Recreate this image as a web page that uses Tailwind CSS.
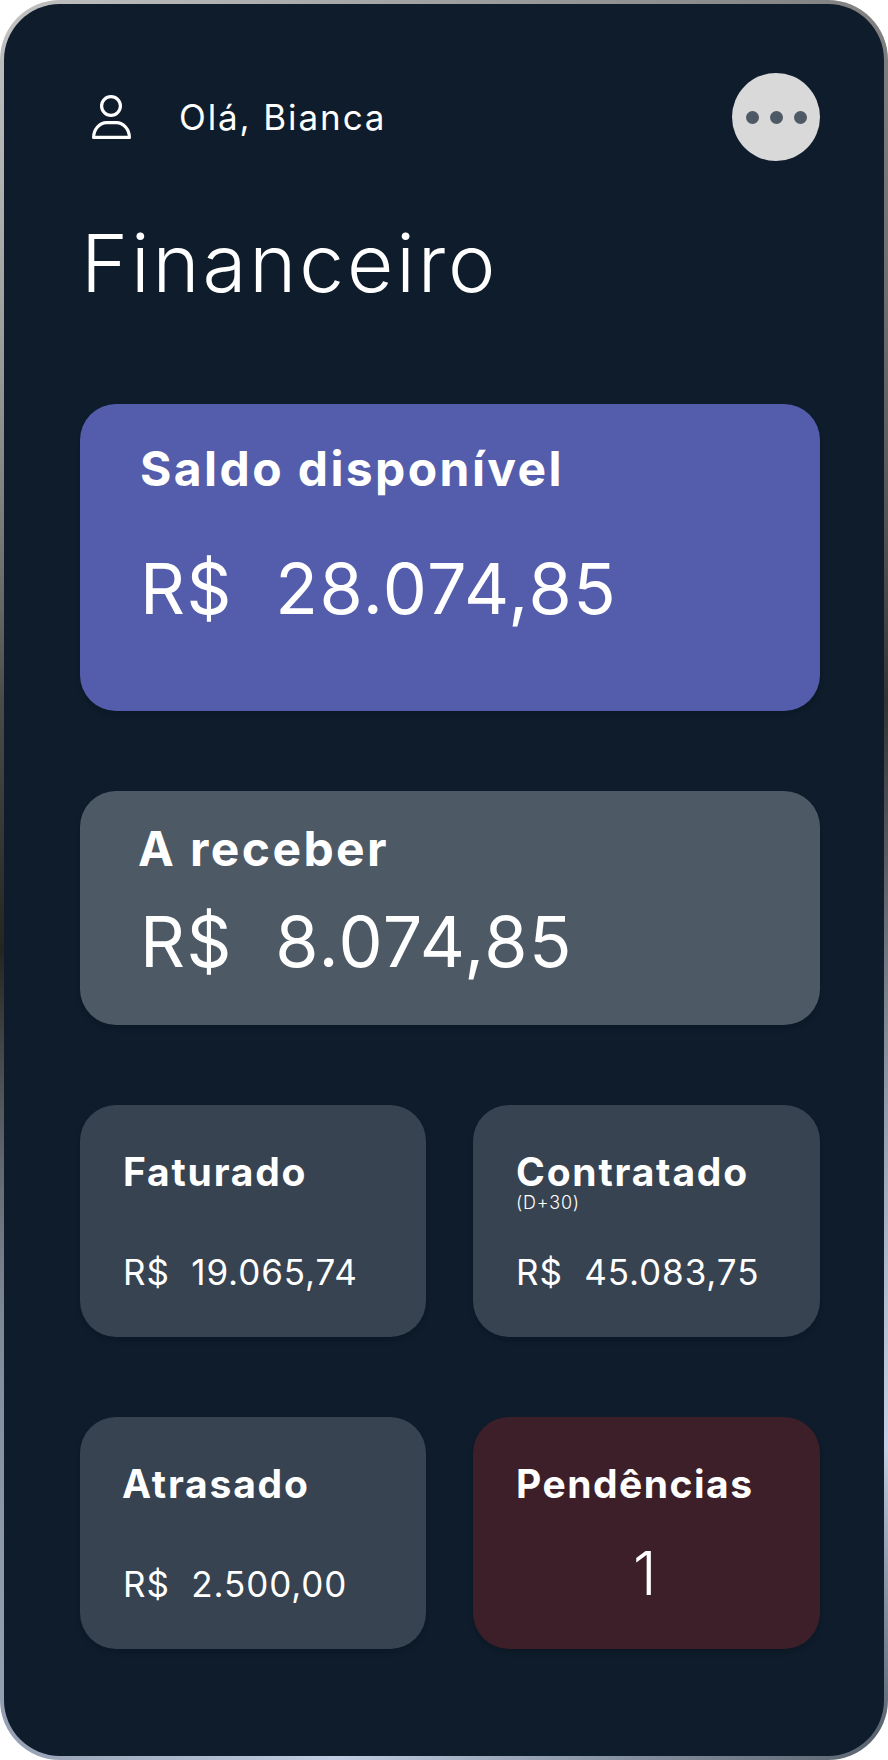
<!DOCTYPE html>
<html lang="pt-BR">
<head>
    <meta charset="UTF-8">
    <meta name="viewport" content="width=device-width, initial-scale=1.0">
    <title>Financeiro</title>
    <script src="https://cdn.jsdelivr.net/npm/@tailwindcss/browser@4"></script>
</head>
<body class="bg-white font-['Inter',sans-serif] text-white">

<div class="w-[888px] h-[1760px] rounded-[60px] p-[4px] bg-[conic-gradient(#a0a0a0_0deg,#808080_27deg,#333333_68deg,#7a828c_105deg,#c5d0e6_142deg,#5a6470_153deg,#8a95a5_170deg,#c0cde2_187deg,#95a0b2_207deg,#7f8996_225deg,#252520_261deg,#4a4a48_292deg,#c0c0c0_333deg,#a0a0a0_360deg)]">
    <div class="w-full h-full rounded-[56px] bg-[#0e1c2b] pl-[76px] pr-[64px] pt-[69px]">

        <header class="flex items-center justify-between h-[88px]">
            <div class="flex items-center">
                <svg class="ml-[12px] w-[39px] h-[44px]" viewBox="0 0 39 44" fill="none" stroke="white" stroke-width="3.2">
                    <circle cx="19" cy="11" r="9.4"/>
                    <path d="M1.600 42.400c0-8 6-14.800 13-14.800h9.800c7 0 13 6.800 13 14.800z" stroke-linejoin="round"/>
                </svg>
                <span class="ml-[48px] text-[35px] tracking-[1.900px]">Olá, Bianca</span>
            </div>
            <button class="w-[88px] h-[88px] rounded-full bg-[#d9d9d9] flex items-center justify-center gap-[11px]">
                <span class="w-[13px] h-[13px] rounded-full bg-[#4d5964]"></span>
                <span class="w-[13px] h-[13px] rounded-full bg-[#4d5964]"></span>
                <span class="w-[13px] h-[13px] rounded-full bg-[#4d5964]"></span>
            </button>
        </header>

        <h1 class="mt-[57px] ml-[1px] text-[80px] leading-[90px] font-light tracking-[2.900px]">Financeiro</h1>

        <section class="mt-[96px] h-[307px] rounded-[36px] bg-[#545dab] pl-[60px] pt-[39px] shadow-md">
            <h2 class="text-[48px] leading-[52px] font-bold tracking-[2.400px]">Saldo disponível</h2>
            <p class="mt-[52px] text-[70px] leading-[84px] tracking-[1.500px] whitespace-pre">R$  28.074,85</p>
        </section>

        <section class="mt-[80px] h-[234px] rounded-[36px] bg-[#4d5964] pl-[58px] pt-[32px] shadow-md">
            <h2 class="text-[48px] leading-[52px] font-bold tracking-[2.400px]">A receber</h2>
            <p class="mt-[25px] ml-[2px] text-[70px] leading-[84px] tracking-[1.500px] whitespace-pre">R$  8.074,85</p>
        </section>

        <div class="mt-[80px] grid grid-cols-[346px_347px] gap-x-[47px] gap-y-[80px]">
            <section class="h-[232px] rounded-[36px] bg-[#374350] pl-[43px] pt-[45px] shadow-md">
                <h3 class="text-[39px] leading-[44px] font-bold tracking-[1.800px]">Faturado</h3>
                <p class="mt-[57px] text-[35px] leading-[42px] tracking-[0.900px] whitespace-pre">R$  19.065,74</p>
            </section>
            <section class="h-[232px] rounded-[36px] bg-[#374350] pl-[43px] pt-[45px] shadow-md">
                <h3 class="text-[39px] leading-[44px] font-bold tracking-[1.800px]">Contratado</h3>
                <p class="-mt-[1px] text-[18px] leading-[20px] font-light tracking-[0.800px]">(D+30)</p>
                <p class="mt-[38px] text-[35px] leading-[42px] tracking-[0.900px] whitespace-pre">R$  45.083,75</p>
            </section>
            <section class="h-[232px] rounded-[36px] bg-[#374350] pl-[43px] pt-[45px] shadow-md">
                <h3 class="-ml-[1px] text-[39px] leading-[44px] font-bold tracking-[1.800px]">Atrasado</h3>
                <p class="mt-[57px] text-[35px] leading-[42px] tracking-[0.900px] whitespace-pre">R$  2.500,00</p>
            </section>
            <section class="h-[232px] rounded-[36px] bg-[#3c1f28] pl-[43px] pt-[45px] shadow-md">
                <h3 class="text-[39px] leading-[44px] font-bold tracking-[1.500px]">Pendências</h3>
                <p class="mt-[31px] pl-[117px] text-[60px] leading-[72px] font-light">1</p>
            </section>
        </div>
    </div>
</div>

</body>
</html>
